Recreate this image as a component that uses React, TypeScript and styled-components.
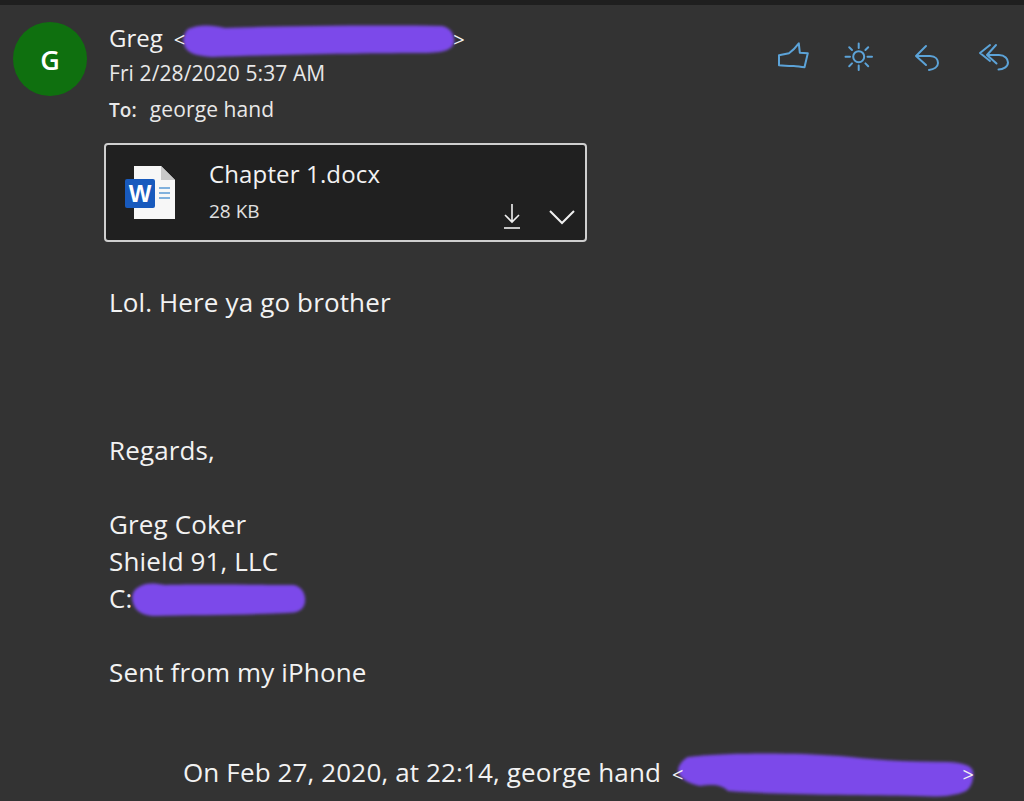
import React from "react";
import styled, { createGlobalStyle } from "styled-components";

const Global = createGlobalStyle`
  html, body { margin: 0; padding: 0; background: #333333; }
  body { font-family: "Open Sans", "Noto Sans", "Liberation Sans", sans-serif; color: #f2f2f2; }
`;

const Page = styled.div`
  width: 1024px;
  height: 801px;
  overflow: hidden;
  background: #333333;
  display: flex;
  flex-direction: column;
`;

const TopBar = styled.div`
  height: 5px;
  flex: none;
  background: #1f1f1f;
`;

const Header = styled.header`
  display: flex;
  align-items: flex-start;
  padding: 17px 15px 0 13px;
`;

const Avatar = styled.div`
  width: 74px;
  height: 74px;
  flex: none;
  border-radius: 50%;
  background: #0f700f;
  color: #fff;
  font-size: 27px;
  font-weight: 600;
  display: flex;
  align-items: center;
  justify-content: center;
  margin-right: 22px;
`;

const Meta = styled.div`
  flex: 1;
  display: flex;
  flex-direction: column;
  margin-top: -2px;
`;

const MetaLine = styled.div`
  font-size: 21px;
  line-height: 36px;
  height: 36px;
  letter-spacing: 0.1px;
  color: #e8e8e8;
  white-space: nowrap;
  position: relative;
`;

const SenderLine = styled(MetaLine)`
  font-size: 24px;
  line-height: 35px;
  height: 35px;
  letter-spacing: 0;
  color: #f2f2f2;
`;

const ToLabel = styled.strong`
  font-weight: 600;
  margin-right: 13px;
  font-size: 19px;
`;

const Bracket = styled.span<{ $gap: number }>`
  font-size: 20px;
  margin-left: ${(p) => p.$gap}px;
  position: relative;
  z-index: 1;
`;

const Actions = styled.div`
  display: flex;
  gap: 34.5px;
  margin-top: 20px;
  color: #5ca3d8;
`;

const ActionIcon = styled.svg`
  width: 32px;
  height: 32px;
  fill: none;
  stroke: currentColor;
  stroke-width: 2;
  stroke-linecap: round;
  stroke-linejoin: round;
`;

const Card = styled.section`
  box-sizing: border-box;
  width: 483px;
  height: 99px;
  margin: 16px 0 0 104px;
  border: 2px solid #cfcfcf;
  border-radius: 4px;
  background: #202020;
  display: flex;
  position: relative;
`;

const FileIcon = styled.svg`
  width: 52px;
  height: 58px;
  margin: 21px 0 0 19px;
  flex: none;
`;

const FileInfo = styled.div`
  display: flex;
  flex-direction: column;
  margin: 11px 0 0 32px;
`;

const FileName = styled.div`
  font-size: 24px;
  line-height: 36px;
  letter-spacing: 0.14px;
  color: #f2f2f2;
`;

const FileSize = styled.div`
  font-size: 19px;
  line-height: 36px;
  margin-top: 1px;
  color: #e0e0e0;
`;

const CardActions = styled.div`
  margin-left: auto;
  display: flex;
  align-items: flex-end;
  gap: 28px;
  padding: 0 10px 10px 0;
  color: #f0f0f0;
`;

const CardIcon = styled.svg<{ $w: number }>`
  width: ${(p) => p.$w}px;
  height: 28px;
  fill: none;
  stroke: currentColor;
  stroke-width: 2;
`;

const Body = styled.main`
  margin-top: 42px;
  padding-left: 109px;
  font-size: 26px;
  letter-spacing: 0.14px;
  color: #f2f2f2;
`;

const Line = styled.div`
  line-height: 37px;
  height: 37px;
  white-space: nowrap;
  position: relative;
`;

const Gap = styled.div<{ $lines: number }>`
  height: ${(p) => p.$lines * 37}px;
`;

const Quote = styled(Line)`
  margin-top: 63px;
  margin-left: 74px;
`;

const Redaction = styled.svg<{ $x: number; $y: number; $w: number; $h: number }>`
  position: absolute;
  left: ${(p) => p.$x}px;
  top: ${(p) => p.$y}px;
  width: ${(p) => p.$w}px;
  height: ${(p) => p.$h}px;
  overflow: visible;
  pointer-events: none;
`;

const BLUR = (
  <filter id="smear" x="-10%" y="-30%" width="120%" height="160%">
    <feGaussianBlur stdDeviation="1.6" />
  </filter>
);

export default function App() {
  return (
    <Page>
      <Global />
      <TopBar />
      <Header>
        <Avatar>G</Avatar>
        <Meta>
          <SenderLine>
            Greg<Bracket $gap={11}>&lt;</Bracket>
            <Bracket $gap={268}>&gt;</Bracket>
            <Redaction $x={71} $y={3} $w={275} $h={35} viewBox="0 0 275 35">
              <defs>{BLUR}</defs>
              <path
                filter="url(#smear)"
                fill="#7c48ea"
                d="M8 6 C20 1 32 2 45 5 C100 3 200 2 262 3 C271 5 275 12 274 20 C271 28 262 30 240 30 C180 30 90 32 32 34 C16 33 8 30 5 24 C2 18 3 11 8 6 Z"
              />
            </Redaction>
          </SenderLine>
          <MetaLine>Fri 2/28/2020 5:37 AM</MetaLine>
          <MetaLine>
            <ToLabel>To:</ToLabel>george hand
          </MetaLine>
        </Meta>
        <Actions>
          <ActionIcon viewBox="0 0 32 32">
            <path d="M1 13.3 L11 11.3 C14 9 18 5 20.8 1.3 L21.8 10.7 L29.8 11.3 L26.5 25.3 C22 25 19 24 15.8 24 C11 24 6 24 1 23.3 Z" />
          </ActionIcon>
          <ActionIcon viewBox="0 0 32 32">
            <circle cx="14.7" cy="14.7" r="5.5" />
            <path d="M14.7 1.5 V6 M14.7 23.5 V28 M1.5 14.7 H6 M23.5 14.7 H28 M5.2 5.2 L8 8 M24.2 5.2 L21.4 8 M5.2 24.2 L8 21.4 M24.2 24.2 L21.4 21.4" />
          </ActionIcon>
          <ActionIcon viewBox="0 0 32 32">
            <path d="M15 4 L5 14 L15 23 M5 14 H19 C25 14 27 18 27 21 C27 25 23 27.5 18 28" />
          </ActionIcon>
          <ActionIcon viewBox="0 0 32 32">
            <path d="M13 3 L3 11 L13 19 M19 3 L10 13 L19.5 21.5 M10 13 H22 C28 13 31 17 31 20.5 C31 25 26 27.5 21.5 27.5" />
          </ActionIcon>
        </Actions>
      </Header>
      <Card>
        <FileIcon viewBox="0 0 52 58">
          <path d="M9 0 H36 L50 14 V53 H9 Z" fill="#f7f7f7" />
          <path d="M36 0 V14 H50 Z" fill="#c9c9c9" />
          <rect x="0" y="13" width="30" height="29" rx="2" fill="#185abd" />
          <text x="15" y="36" textAnchor="middle" fontFamily="'Liberation Sans', sans-serif" fontWeight="700" fontSize="24" fill="#fff">W</text>
          <path d="M34 22 H45 M34 27 H45 M34 32 H45" stroke="#5b9bd5" strokeWidth="1.6" />
        </FileIcon>
        <FileInfo>
          <FileName>Chapter 1.docx</FileName>
          <FileSize>28 KB</FileSize>
        </FileInfo>
        <CardActions>
          <CardIcon $w={18} viewBox="0 0 18 28">
            <path d="M9 2 V20 M2 13 L9 20 L16 13" strokeWidth="1.6" />
            <path d="M1 26 H17" strokeWidth="1.6" />
          </CardIcon>
          <CardIcon $w={26} viewBox="0 0 26 28">
            <path d="M1 9 L13 21 L25 9" />
          </CardIcon>
        </CardActions>
      </Card>
      <Body>
        <Line>Lol. Here ya go brother</Line>
        <Gap $lines={3} />
        <Line>Regards,</Line>
        <Gap $lines={1} />
        <Line>Greg Coker</Line>
        <Line>Shield 91, LLC</Line>
        <Line>
          C:
          <Redaction $x={20} $y={2} $w={177} $h={35} viewBox="0 0 174 35" preserveAspectRatio="none">
            <path
              filter="url(#smear)"
              fill="#7c48ea"
              d="M8 6 C16 0 24 1 36 3 C70 2 130 3 162 3 C170 5 174 12 173 20 C172 28 166 31 155 31 C110 33 60 33 25 34 C14 34 6 29 4 21 C2 14 4 9 8 6 Z"
            />
          </Redaction>
        </Line>
        <Gap $lines={1} />
        <Line>Sent from my iPhone</Line>
        <Quote>
          On Feb 27, 2020, at 22:14, george hand<Bracket $gap={11}>&lt;</Bracket>
          <Bracket $gap={279}>&gt;</Bracket>
          <Redaction $x={495} $y={-1} $w={295} $h={47} viewBox="0 0 295 47">
            <path
              filter="url(#smear)"
              fill="#7c48ea"
              d="M10 4 C40 0 110 -1 162 3 C190 6 225 9 270 9 C285 10 293 12 295 18 C296 28 293 34 288 38 C275 44 258 44 240 43 C180 42 100 42 50 38 C44 32 36 31 22 33 C8 30 0 24 0 17 C1 11 5 7 10 4 Z"
            />
          </Redaction>
        </Quote>
      </Body>
    </Page>
  );
}
